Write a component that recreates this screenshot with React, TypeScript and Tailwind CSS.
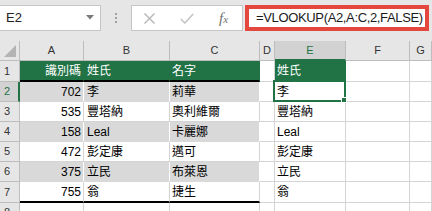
import React from "react";

type Band = "head" | "gray" | "white";
type Row = { n: number; a: string; b: string; c: string; e: string; band: Band };

const rows: Row[] = [
  { n: 1, a: "識別碼", b: "姓氏", c: "名字", e: "姓氏", band: "head" },
  { n: 2, a: "702", b: "李", c: "莉華", e: "李", band: "gray" },
  { n: 3, a: "535", b: "豐塔納", c: "奧利維爾", e: "豐塔納", band: "white" },
  { n: 4, a: "158", b: "Leal", c: "卡麗娜", e: "Leal", band: "gray" },
  { n: 5, a: "472", b: "彭定康", c: "邁可", e: "彭定康", band: "white" },
  { n: 6, a: "375", b: "立民", c: "布萊恩", e: "立民", band: "gray" },
  { n: 7, a: "755", b: "翁", c: "捷生", e: "翁", band: "white" },
];

const base = "box-border flex items-center whitespace-nowrap";

function tableCell(row: Row): string {
  if (row.band === "head") {
    return base + " overflow-hidden bg-[#217346] text-white border-r border-r-[#217346] border-b-2 border-b-black";
  }
  if (row.band === "gray") {
    return base + " overflow-hidden bg-[#d9d9d9] text-black border-r border-r-white border-b border-b-[#d9d9d9]";
  }
  if (row.n === 7) {
    return base + " overflow-hidden bg-white text-black border-r border-r-[#d4d4d4] border-b-2 border-b-black";
  }
  return base + " overflow-hidden bg-white text-black border-r border-r-[#d4d4d4] border-b border-b-[#d4d4d4]";
}

const plain = base + " overflow-hidden bg-white text-black border-r border-b border-[#d4d4d4]";
const colHead = base + " justify-center bg-[#e6e6e6] text-[#333] text-[11px] border-r border-b border-[#bdbdbd]";
const rowHead = base + " bg-[#e6e6e6] text-[#333] text-[11px] pl-[4px] border-r border-b border-[#bdbdbd]";

export default function App() {
  return (
    <div className="w-[432px] h-[211px] overflow-hidden bg-white font-['Liberation_Sans','Noto_Sans_CJK_TC',sans-serif]">
      {/* formula bar */}
      <div className="h-[41px] bg-[#e6e6e6] flex items-start pt-[5px]">
        <div className="box-border w-[101px] h-[26px] bg-white border border-l-0 border-[#c6c6c6] flex items-center justify-between pl-[6px] pr-[6px]">
          <span className="text-[13px] text-[#222]">E2</span>
          <svg width="8" height="5" viewBox="0 0 8 5" className="mb-[1px]">
            <path d="M0 0 L8 0 L4 4.5 Z" fill="#7a7a7a" />
          </svg>
        </div>
        <div className="w-[30px] flex flex-col items-center gap-[2px] pt-[8px]">
          <div className="w-[2px] h-[2px] bg-[#a0a0a0]" />
          <div className="w-[2px] h-[2px] bg-[#a0a0a0]" />
          <div className="w-[2px] h-[2px] bg-[#a0a0a0]" />
        </div>
        <div className="box-border w-[112px] h-[26px] bg-white border border-[#c6c6c6] flex items-center pl-[12px]">
          <svg width="11" height="11" viewBox="0 0 11 11">
            <path d="M0.5 0.5 L10.5 10.5 M10.5 0.5 L0.5 10.5" stroke="#b5b5b5" strokeWidth="1.4" fill="none" />
          </svg>
          <svg width="14" height="11" viewBox="0 0 14 11" className="ml-[25px]">
            <path d="M0.8 6 L4.8 10 L13.2 1" stroke="#c4c4c4" strokeWidth="1.6" fill="none" />
          </svg>
          <span className="ml-[25px] font-['Liberation_Serif',serif] italic text-[15px] text-[#6f6f6f] leading-none">
            f<span className="text-[11px]">x</span>
          </span>
        </div>
        <div className="box-border ml-[2px] w-[184px] h-[26px] border-[4px] border-[#e4473e] bg-white flex items-center pl-[7px]">
          <span className="text-[13px] tracking-[-0.35px] text-[#1a1a1a]">=VLOOKUP(A2,A:C,2,FALSE)</span>
        </div>
      </div>

      {/* sheet grid */}
      <div className="grid grid-cols-[20px_64px_86px_90px_15px_71px_64px_1fr] grid-rows-[20px_21px_20px_20px_20px_20px_20px_21px_20px]">
        {/* column headers */}
        <div className={colHead + " relative"}>
          <svg width="13" height="13" viewBox="0 0 13 13" className="absolute left-[4px] top-[4px]">
            <path d="M12 0 L12 12 L0 12 Z" fill="#b4b4b4" />
          </svg>
        </div>
        <div className={colHead}>A</div>
        <div className={colHead}>B</div>
        <div className={colHead}>C</div>
        <div className={colHead}>D</div>
        <div className={base + " justify-center bg-[#d2d2d2] text-[#217346] text-[11px] border-r border-r-[#bdbdbd] border-b-2 border-b-[#217346]"}>E</div>
        <div className={colHead}>F</div>
        <div className={colHead}>G</div>

        {rows.map((row) => (
          <React.Fragment key={row.n}>
            {row.n === 2 ? (
              <div className={base + " bg-[#d2d2d2] text-[#217346] text-[11px] pl-[4px] border-b border-b-[#bdbdbd] border-r-2 border-r-[#217346]"}>
                {row.n}
              </div>
            ) : (
              <div className={rowHead}>{row.n}</div>
            )}
            <div className={tableCell(row) + " justify-end pr-[2px] " + (row.band === "head" ? "text-[12px]" : "text-[12px]")}>
              {row.a}
            </div>
            <div className={tableCell(row) + " pl-[3px] text-[12px]"}>{row.b}</div>
            <div className={tableCell(row) + " pl-[2px] text-[12px]"}>{row.c}</div>
            <div className={plain} />
            {row.n === 1 ? (
              <div className={base + " overflow-hidden bg-[#217346] text-white text-[12px] pl-[2px] border-r border-r-[#217346] border-b border-b-[#217346]"}>
                {row.e}
              </div>
            ) : row.n === 2 ? (
              <div className={base + " relative z-10 bg-white text-black text-[12px] pl-[2px] border-r border-b border-[#d4d4d4]"}>
                {row.e}
                <div className="absolute left-[-2px] top-[-2px] right-[-1px] bottom-[-1px] border-2 border-[#217346]" />
                <div className="absolute right-[-2px] bottom-[-2px] w-[6px] h-[6px] bg-[#217346] border border-white" />
              </div>
            ) : (
              <div className={plain + " text-[12px] pl-[2px]"}>{row.e}</div>
            )}
            <div className={plain} />
            <div className={plain} />
          </React.Fragment>
        ))}

        {/* row 8 */}
        <div className={rowHead}>8</div>
        <div className={plain} />
        <div className={plain} />
        <div className={plain} />
        <div className={plain} />
        <div className={plain} />
        <div className={plain} />
        <div className={plain} />
      </div>
    </div>
  );
}
